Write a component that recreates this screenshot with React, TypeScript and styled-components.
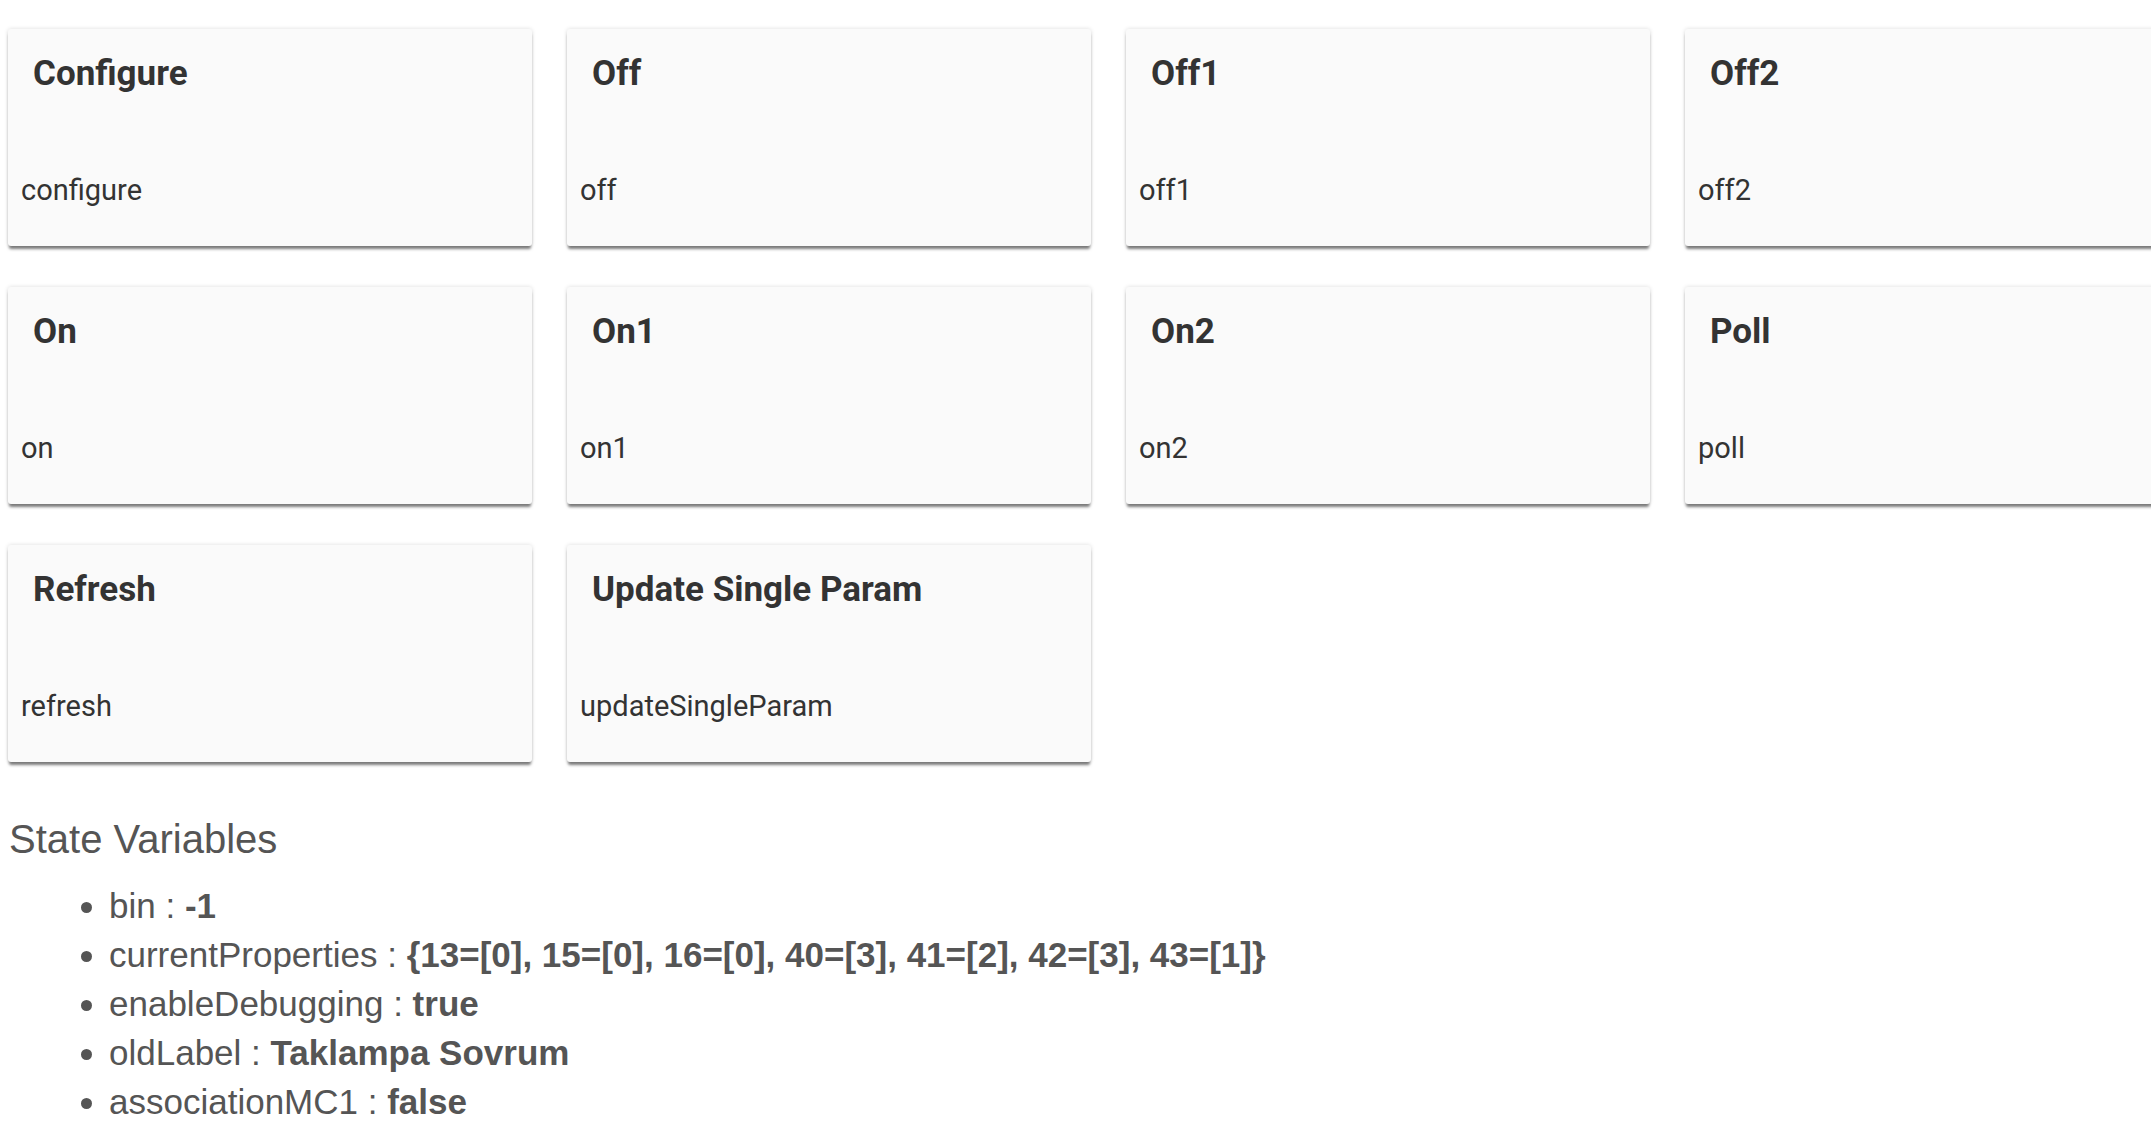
import * as React from 'react';
import styled, { createGlobalStyle } from 'styled-components';

type Command = {
    title: string;
    name: string;
}

type StateVar = {
    key: string;
    value: string;
}

const commands: Array<Command> = [
    { title: 'Configure', name: 'configure' },
    { title: 'Off', name: 'off' },
    { title: 'Off1', name: 'off1' },
    { title: 'Off2', name: 'off2' },
    { title: 'On', name: 'on' },
    { title: 'On1', name: 'on1' },
    { title: 'On2', name: 'on2' },
    { title: 'Poll', name: 'poll' },
    { title: 'Refresh', name: 'refresh' },
    { title: 'Update Single Param', name: 'updateSingleParam' },
];

const stateVars: Array<StateVar> = [
    { key: 'bin', value: '-1' },
    { key: 'currentProperties', value: '{13=[0], 15=[0], 16=[0], 40=[3], 41=[2], 42=[3], 43=[1]}' },
    { key: 'enableDebugging', value: 'true' },
    { key: 'oldLabel', value: 'Taklampa Sovrum' },
    { key: 'associationMC1', value: 'false' },
];

const App = () => {
    return (
        <Page>
            <GlobalStyle />
            <Grid>
                {commands.map(cmd =>
                    <Card key={cmd.name}>
                        <CardTitle>{cmd.title}</CardTitle>
                        <CardName>{cmd.name}</CardName>
                    </Card>
                )}
            </Grid>

            <StateTitle>State Variables</StateTitle>
            <StateList>
                {stateVars.map(v =>
                    <li key={v.key}>
                        {v.key} : <b>{v.value}</b>
                    </li>
                )}
            </StateList>
        </Page>
    )
}

export default App

const GlobalStyle = createGlobalStyle`
  html, body {
    margin: 0;
    padding: 0;
    background: #ffffff;
    overflow-x: hidden;
  }
  body {
    font-family: Roboto, "Liberation Sans", sans-serif;
  }
`;
const Page = styled.div`
  padding: 29px 0 0 8px;
  width: 2151px;
  overflow: hidden;
`;
const Grid = styled.div`
  display: grid;
  grid-template-columns: repeat(4, 524px);
  column-gap: 35px;
  row-gap: 41px;
`;
const Card = styled.div`
  background: #fafafa;
  border-radius: 3px;
  height: 217px;
  box-sizing: border-box;
  display: flex;
  flex-direction: column;
  box-shadow: 0 4px 3px -1px rgba(0, 0, 0, 0.5), 0 0 4px rgba(0, 0, 0, 0.14);
  color: #333;
`;
const CardTitle = styled.h3`
  margin: 0;
  padding: 24px 0 0 25px;
  font-size: 35px;
  line-height: 41px;
  font-weight: 700;
`;
const CardName = styled.div`
  margin-top: 79px;
  padding-left: 13px;
  font-size: 29px;
  line-height: 34px;
`;
const StateTitle = styled.div`
  margin-top: 55px;
  padding-left: 1px;
  font-family: "Liberation Sans", Arial, sans-serif;
  font-size: 40px;
  line-height: 44px;
  color: #555;
`;
const StateList = styled.ul`
  margin: 20px 0 0 0;
  padding-left: 101px;
  font-family: "Liberation Sans", Arial, sans-serif;
  font-size: 35px;
  line-height: 49px;
  color: #555;

  b {
    font-weight: 700;
  }
`;
